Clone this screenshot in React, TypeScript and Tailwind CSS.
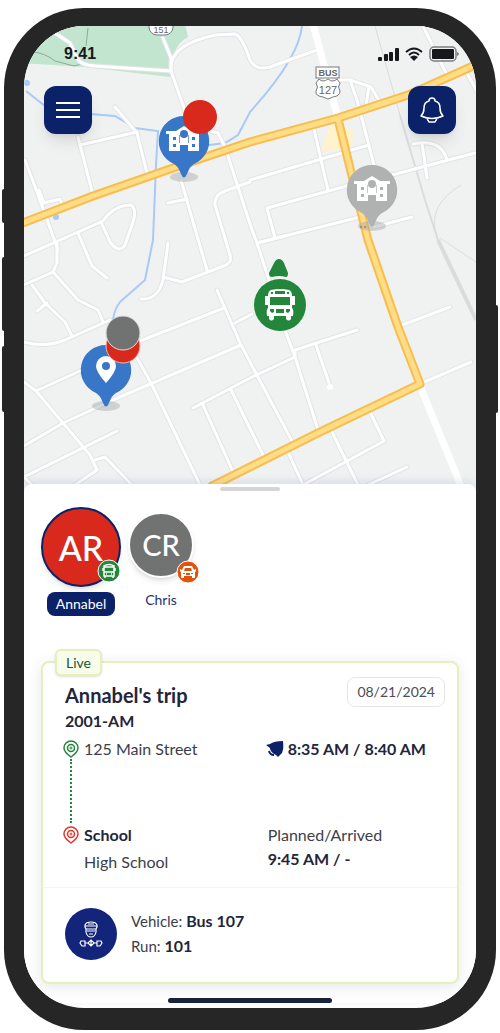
import type { ReactNode } from 'react'
import { clsx } from 'clsx'

interface Rider {
  id: string
  initials: string
  name: string
  active: boolean
}

const riders: Rider[] = [
  { id: 'annabel', initials: 'AR', name: 'Annabel', active: true },
  { id: 'chris', initials: 'CR', name: 'Chris', active: false },
]

const streets = [
  'M55 33L70 43L77 58Q80 65 95 66L171 71',
  'M163 38L171 58V71L190 125L218 133L225 147L252 230L257 243L285 330L295 357L318 430',
  'M171 68Q170 45 215 35L235 34Q242 36 250 60Q256 71 270 67L317 50',
  'M115 107L137 133L147 173',
  'M80 145L137 132',
  'M78 137L93 195',
  'M25 160L37 192L58 250',
  'M39 190L44 203L60 199L62 205',
  'M181 180L200 246L207 270',
  'M168 203L187 199',
  'M24 256L103 221Q114 205 131 205Q137 209 133 222L125 245Q119 254 110 242L101 222',
  'M78 233L92 266L107 278',
  'M57 243V263L53 272L24 285',
  'M53 272L78 300L98 310L103 322',
  'M32 285L45 303L65 322L72 336',
  'M47 303L37 311',
  'M24 342Q45 348 65 340L110 320',
  'M168 243L163 280Q158 300 141 299',
  'M163 277L182 282L226 265Q232 262 230 255L215 205Q214 195 225 191L250 182',
  'M217 290L241 345L293 443',
  'M235 323L252 314',
  'M224 308L135 343',
  'M130 345L152 385L200 485',
  'M241 345L113 400L63 423L24 446',
  'M24 382L36 391L63 423L90 455L97 470L75 485',
  'M36 391L82 370',
  'M117 431L24 477L32 485',
  'M95 460L105 457L132 485',
  'M193 408L250 378L295 357V350L357 330',
  'M203 405L234 474',
  'M231 390L264 457',
  'M316 345L329 383',
  'M288 452L303 485',
  'M332 432L358 485',
  'M370 412L384 441L303 485',
  'M407 467L368 485',
  'M402 325L450 307',
  'M422 383L471 362',
  'M257 243L285 236',
  'M250 180L369 145',
  'M313 125L328 190',
  'M338 80L350 80L357 100L361 115L374 165',
  'M350 80L371 87L380 102',
  'M366 105L369 87',
  'M275 238L267 208L350 185',
  'M257 243L360 217',
  'M374 227L412 217',
  'M392 175L475 153',
  'M422 143L427 178',
  'M413 144Q441 138 447 160',
  'M423 26L447 75',
  'M467 73L476 90',
]

const mainRoads = [
  'M20 224L93 196L173 168L250 142L338 118L408 95L480 63',
  'M338 119L351 172L368 240L398 327L420 384L320 432L212 486',
]

function SchoolGlyph({ x, y, hole }: { x: number; y: number; hole: string }) {
  return (
    <g transform={`translate(${x} ${y})`}>
      <path fill="#fff" d="M-18 -10H-8L0 -15L8 -10H18V-7H15V10H4V4H-4V10H-15V-7H-18Z" />
      <path fill={hole} d="M-11 -4H-8V-1H-11ZM8 -4H11V-1H8ZM-11 3H-8V6H-11ZM8 3H11V6H8Z" />
      <path fill={hole} d="M-5 -6H-4L-4 2H-5ZM5 -6H4L4 2H5Z" opacity="0.7" />
      <circle cy="-7" r="4" fill={hole} />
    </g>
  )
}

function MapPin({ x, y, color, children }: { x: number; y: number; color: string; children: ReactNode }) {
  return (
    <g>
      <ellipse cx={x} cy={y + 36} rx="14" ry="5" fill="#a5a6a8" opacity="0.45" />
      <path
        fill={color}
        transform={`translate(${x} ${y})`}
        d="M0 -25A25 25 0 0 1 10 23Q6 25 3 33Q0 40 -3 33Q-6 25 -10 23A25 25 0 0 1 0 -25Z"
      />
      {children}
    </g>
  )
}

function BusShape({ ink, hole }: { ink: string; hole: string }) {
  return (
    <>
      <path
        fill={ink}
        d="M-9 -15Q0 -17 9 -15Q12 -14 12 -9H15V0H12V3Q14 4 13 11H11V14Q9 17 6 14V11H-6V14Q-9 17 -11 14V11H-13Q-14 4 -12 3V0H-15V-9H-12Q-12 -14 -9 -15Z"
      />
      <path fill={hole} d="M-5 -14H5V-11H-5ZM-9 -13H-7V-11H-9ZM7 -13H9V-11H7ZM-10 -8H10V0H-10ZM-10 4H-6V7L-8 8L-10 6ZM10 4H6V7L8 8L10 6ZM-4 4H4V8H-4Z" />
    </>
  )
}

function RouteMap() {
  return (
    <svg
      viewBox="24 26 452 474"
      preserveAspectRatio="xMidYMin slice"
      className="absolute inset-0 h-full w-full"
      role="img"
      aria-label="Route map"
    >
      <rect x="0" y="0" width="500" height="520" fill="#f0f2f2" />
      <path fill="#c2e5cf" d="M20 20H184L188 37Q171 45 170 77L85 67L20 63Z" />
      <path fill="#fff2cc" d="M330 124L353 130L352 147L321 152Z" />
      <g fill="none" stroke="#8fa899" strokeWidth="1">
        <path d="M88 28L86 46" />
        <path d="M33 52Q45 53 55 61L74 66L86 63" />
      </g>
      <g fill="none" stroke="#a9c9f7" strokeWidth="2">
        <path d="M26 91L45 106M90 114L115 116L135 128L158 131L156 165L153 240L145 280L120 302Q114 310 113 320" />
        <path d="M209 145L225 143L238 135L250 112Q299 58 302 26" />
      </g>
      <circle cx="27" cy="83" r="3" fill="#a9c9f7" />
      <circle cx="56" cy="217" r="3" fill="#a9c9f7" />
      <g fill="none" stroke="#d9dbdd">
        <path strokeWidth="1" d="M375 26L400 115" />
        <path strokeWidth="2" d="M400 115L425 200L438 240" />
        <path strokeWidth="4" d="M438 240L476 320" />
        <path strokeWidth="1" d="M461 185Q428 205 436 233M440 238L476 262" />
      </g>
      <g fill="none" strokeLinecap="round" strokeLinejoin="round">
        {streets.map(d => (
          <path key={d} d={d} stroke="#e1e3e6" strokeWidth="5" />
        ))}
        {streets.map(d => (
          <path key={d} d={d} stroke="#fff" strokeWidth="3" />
        ))}
        <path d="M420 386L461 486M313 24L337 114" stroke="#fff" strokeWidth="7" />
        <circle cx="330" cy="387" r="3" fill="#fff" />
        {mainRoads.map(d => (
          <path key={d} d={d} stroke="#f8bd50" strokeWidth="9" />
        ))}
        {mainRoads.map(d => (
          <path key={d} d={d} stroke="#ffdd84" strokeWidth="5" />
        ))}
      </g>
      <path d="M360 227H368" stroke="#d8654f" strokeWidth="2" strokeDasharray="2 2" />

      {/* highway shields */}
      <g fontFamily="Liberation Sans, sans-serif" textAnchor="middle" fill="#636769">
        <rect x="149" y="16" width="24" height="19" rx="8" fill="#fff" stroke="#777b7d" />
        <text x="161" y="33" fontSize="9">151</text>
        <rect x="316" y="67" width="23" height="11" fill="#fff" stroke="#777b7d" />
        <text x="328" y="76" fontSize="9" fontWeight="bold">BUS</text>
        <path fill="#fff" stroke="#777b7d" d="M319 79Q323 83 328 79Q333 83 337 79L340 83Q337 87 340 91Q340 96 333 97L328 99L323 97Q315 96 316 91Q319 87 316 83Z" />
        <text x="328" y="94" fontSize="11">127</text>
      </g>

      <MapPin x={184} y={141} color="#3876c8">
        <SchoolGlyph x={184} y={141} hole="#3876c8" />
      </MapPin>
      <circle cx="200" cy="117" r="17" fill="#d9291c" />

      <MapPin x={372} y={190} color="#b0b1b1">
        <SchoolGlyph x={372} y={191} hole="#b0b1b1" />
      </MapPin>

      <path fill="#23863b" d="M279 259Q276 259 274 263L269 273Q269 277 272 277Q279 275 286 277Q288 277 288 273L284 263Q282 259 279 259Z" />
      <circle cx="280" cy="305" r="26" fill="#23863b" />
      <g transform="translate(280 305)">
        <BusShape ink="#fff" hole="#23863b" />
      </g>

      <MapPin x={106} y={370} color="#3876c8">
        <path fill="#fff" d="M106 356A10 10 0 0 0 96 366Q96 372 106 383Q116 372 116 366A10 10 0 0 0 106 356Z" />
        <circle cx="106" cy="366" r="4" fill="#3876c8" />
      </MapPin>
      <circle cx="123" cy="346" r="17" fill="#d9291c" stroke="#f3b9b5" />
      <circle cx="123" cy="333" r="17" fill="#717372" stroke="#dcdcdc" />
    </svg>
  )
}

function StatusIcons() {
  return (
    <svg width="82" height="16" viewBox="0 0 82 16" aria-hidden="true">
      <g fill="#16181c">
        <rect x="0" y="11" width="4" height="4" rx="1" />
        <rect x="6" y="8" width="4" height="7" rx="1" />
        <rect x="11" y="6" width="4" height="9" rx="1" />
        <rect x="17" y="2" width="4" height="13" rx="1" />
        <path d="M36 15L32 11Q36 8 40 11Z" />
        <rect x="54" y="3" width="22" height="10" rx="1" />
      </g>
      <path fill="none" stroke="#16181c" strokeWidth="2" d="M28 6Q36 -1 44 6M31 9Q36 4 41 9" />
      <rect x="52" y="1" width="26" height="14" rx="4" fill="none" stroke="#7b7d80" strokeWidth="1.500" />
      <path fill="#7b7d80" d="M79 6Q83 8 79 10Z" />
    </svg>
  )
}

function BellIcon() {
  return (
    <svg width="26" height="28" viewBox="0 0 26 28" fill="none" stroke="#fff" strokeWidth="1.500" strokeLinejoin="round" aria-hidden="true">
      <path d="M2 20Q5 17 5 12Q5 6 10 5Q10 2 13 2Q16 2 16 5Q21 6 21 12Q21 17 24 20Q13 25 2 20Z" />
      <path d="M8 23Q9 24 10 26H16Q17 24 18 23" />
    </svg>
  )
}

function RiderBadge({ active }: { active: boolean }) {
  return (
    <svg
      viewBox="0 0 24 24"
      className={clsx('absolute size-6', active ? '-right-0.5 bottom-0.5' : '-right-2 -bottom-2')}
      aria-hidden="true"
    >
      <circle cx="12" cy="12" r="11" fill={active ? '#23863b' : '#e0530f'} stroke="#fff" strokeWidth="1" />
      {active ? (
        <g fill="none" stroke="#fff" strokeWidth="1.500">
          <path d="M7 7Q12 4 17 7V17H7ZM7 8H17M7 13H17M6 9V12M18 9V12M8 17V19M16 17V19M9 15H10M14 15H15" />
        </g>
      ) : (
        <g>
          <path fill="#fff" d="M8 6H16L18 10L20 9V11L19 12V18H16V16H8V18H5V12L4 11V9L6 10Z" />
          <path fill="#e0530f" d="M9 8H15L16 11H8ZM7 13H9V14H7ZM15 13H17V14H15ZM10 13H14V15H10Z" />
        </g>
      )}
    </svg>
  )
}

function RiderButton({ rider }: { rider: Rider }) {
  return (
    <button
      type="button"
      aria-pressed={rider.active}
      className={clsx('flex flex-col items-center', rider.active ? 'w-20' : 'w-16 pt-1')}
    >
      <span
        className={clsx(
          'relative flex items-center justify-center rounded-full font-medium text-white shadow-md',
          rider.active
            ? 'size-20 border-2 border-[#0b2268] bg-[#d9291c] text-[34px]'
            : 'mt-px size-[66px] border-2 border-white bg-[#717372] text-[29px]',
        )}
      >
        {rider.initials}
        <RiderBadge active={rider.active} />
      </span>
      <span
        className={clsx(
          'text-sm',
          rider.active
            ? 'mt-[5px] rounded-lg bg-[#0b2268] px-[9px] py-0.5 text-white'
            : 'mt-3 text-[#26326f]',
        )}
      >
        {rider.name}
      </span>
    </button>
  )
}

function StopIcon({ color }: { color: string }) {
  return (
    <svg width="16" height="20" viewBox="0 0 16 20" fill="none" stroke={color} aria-hidden="true" className="shrink-0">
      <path strokeWidth="1.500" d="M8 2A7 7 0 0 0 1 9Q1 13 8 18Q15 13 15 9A7 7 0 0 0 8 2Z" />
      <circle cx="8" cy="9" r="3.500" strokeWidth="1.500" />
      <circle cx="8" cy="9" r="1" strokeWidth="1" />
    </svg>
  )
}

function DriverIcon() {
  return (
    <svg width="24" height="28" viewBox="0 0 24 28" fill="none" stroke="#fff" strokeWidth="1.200" aria-hidden="true">
      <path d="M6 7V5Q7 2 12 2Q17 2 18 5V7L17 9H7ZM6 6H18M9 4H15M7 9V12Q8 17 12 17Q16 17 17 12V9M8 11H16M10 14H14" />
      <path d="M2 21H6V26H3L1 23ZM22 21H18V26H21L23 23ZM6 23H9L12 20L15 23H18M9 23L12 26L15 23M12 20V26" />
    </svg>
  )
}

function TripCard() {
  return (
    <section className="relative rounded-lg border-2 border-[#e6f0b8] bg-white text-[#23263a] shadow-[0_3px_14px_rgba(40,60,80,0.12)]">
      <span className="absolute -top-3.5 left-3 rounded-md border-2 border-[#e6f0b8] bg-[#f7fdea] px-[9px] text-sm leading-[23px] text-[#24543a] shadow-sm">
        Live
      </span>

      <div className="flex justify-between pt-3.5 pr-3 pl-[22px]">
        <div>
          <h2 className="mt-1 text-xl leading-7 font-bold">Annabel's trip</h2>
          <p className="leading-6 font-bold">2001-AM</p>
        </div>
        <time className="h-[30px] rounded-lg border border-gray-200 px-[9px] text-sm leading-7 text-[#4b4d58]">
          08/21/2024
        </time>
      </div>

      <div className="mt-1 grid grid-cols-[8fr_7fr] pr-3 pb-[13px] pl-[22px] leading-6 text-[#3c3e4a]">
        <div className="flex">
          <div className="-ml-0.5 flex w-4 flex-col items-center pt-0.5">
            <StopIcon color="#23863b" />
            <span className="grow border-l-2 border-dotted border-[#23863b]" />
          </div>
          <p className="h-[86px] pl-[5px]">125 Main Street</p>
        </div>
        <p className="flex h-6 items-center gap-1 font-bold whitespace-nowrap text-[#23263a]">
          <svg width="18" height="18" viewBox="0 0 18 18" aria-hidden="true" className="-ml-0.5 shrink-0">
            <path fill="#0b2268" d="M0 5L4 4Q8 1 17 1Q18 8 16 13L12 17L10 15L8 14Q4 11 4 8Z" />
            <path fill="none" stroke="#0b2268" strokeWidth="2" d="M3 11Q4 15 8 15" />
          </svg>
          8:35 AM / 8:40 AM
        </p>

        <div className="flex">
          <div className="-ml-0.5 flex w-4 flex-col items-center pt-0.5">
            <StopIcon color="#e0342b" />
          </div>
          <div className="pl-[5px]">
            <p className="font-bold text-[#23263a]">School</p>
            <p className="mt-[3px]">High School</p>
          </div>
        </div>
        <div>
          <p>Planned/Arrived</p>
          <p className="font-bold text-[#23263a]">9:45 AM / -</p>
        </div>
      </div>

      <div className="flex items-center gap-3.5 border-t border-gray-100 pt-5 pb-[22px] pl-[22px]">
        <span className="flex size-[52px] items-center justify-center rounded-full bg-[#13257a]">
          <DriverIcon />
        </span>
        <div className="text-[15px] leading-[25px] text-[#3c3e4a]">
          <p>Vehicle: <b className="text-base leading-6 text-[#23263a]">Bus 107</b></p>
          <p>Run: <b className="text-base leading-6 text-[#23263a]">101</b></p>
        </div>
      </div>
    </section>
  )
}

export default function App() {
  return (
    <div className="bg-white px-1 py-2 font-['Lato',sans-serif]">
      <div className="relative">
        {/* hardware buttons */}
        <span className="absolute top-[181px] -left-0.5 h-[34px] w-1 rounded-sm bg-[#262626]" />
        <span className="absolute top-[249px] -left-0.5 h-[74px] w-1 rounded-sm bg-[#262626]" />
        <span className="absolute top-[338px] -left-0.5 h-[66px] w-1 rounded-sm bg-[#262626]" />
        <span className="absolute top-[297px] -right-0.5 h-[108px] w-1 rounded-sm bg-[#262626]" />

        <main className="relative overflow-hidden rounded-[80px] border-x-20 border-t-18 border-b-22 border-[#262626] bg-white">
          <div className="relative h-[474px] overflow-hidden">
            <RouteMap />
            <header className="relative">
              <div className="flex h-14 items-center justify-between pr-4 pl-10">
                <time className="font-['Liberation_Sans',sans-serif] text-base font-bold text-[#16181c]">9:41</time>
                <StatusIcons />
              </div>
              <div className="flex items-center justify-between px-5 pt-1">
                <button type="button" aria-label="Menu" className="flex size-12 items-center justify-center rounded-xl bg-[#0b2268] shadow-lg">
                  <svg width="24" height="20" viewBox="0 0 24 20" stroke="#fff" strokeWidth="2" aria-hidden="true">
                    <path d="M0 3H24M0 10H24M0 17H24" />
                  </svg>
                </button>
                <button type="button" aria-label="Notifications" className="flex size-12 items-center justify-center rounded-xl bg-[#0b2268] shadow-lg">
                  <BellIcon />
                </button>
              </div>
            </header>
          </div>

          <div className="relative -mt-4 rounded-t-lg bg-white px-[17px] pt-[3px] shadow-[0_-3px_8px_rgba(60,70,120,0.12)]">
            <div className="mx-auto h-1 w-[60px] rounded-full bg-[#d5d5d7]" />
            <div className="mt-4 flex items-start gap-2">
              {riders.map(r => (
                <RiderButton key={r.id} rider={r} />
              ))}
            </div>
            <div className="pt-[45px]">
              <TripCard />
            </div>
            <div className="mx-auto mt-3.5 mb-[5px] h-[5px] w-[164px] rounded-full bg-[#17233b]" />
          </div>
        </main>
      </div>
    </div>
  )
}
